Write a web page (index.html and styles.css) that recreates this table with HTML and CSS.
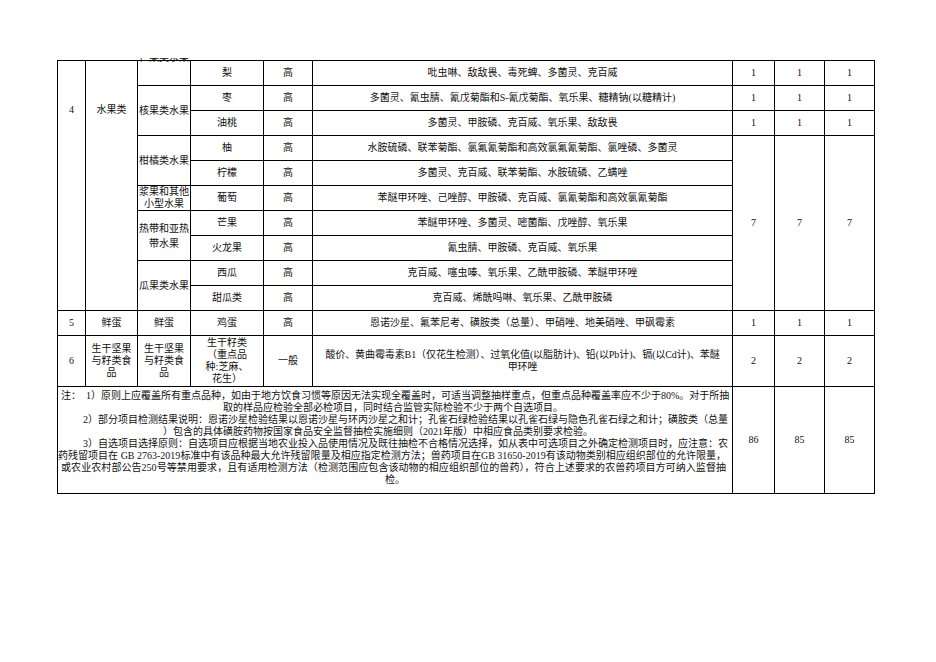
FILE: index.html
```html
<!DOCTYPE html>
<html lang="zh-CN">
<head>
<meta charset="utf-8">
<title>抽检项目表</title>
<link rel="stylesheet" href="styles.css">
</head>
<body>
<div class="page">
  <div class="sheet">
    <div class="c top rs10">4</div>
    <div class="c top rs10">水果类</div>
    <div class="c clipcat"></div>
    <div class="c">梨</div>
    <div class="c">高</div>
    <div class="c">吡虫啉、敌敌畏、毒死蜱、多菌灵、克百威</div>
    <div class="c">1</div><div class="c">1</div><div class="c">1</div>

    <div class="c rs2">核果类水果</div>
    <div class="c">枣</div>
    <div class="c">高</div>
    <div class="c">多菌灵、氰虫腈、氰戊菊酯和S-氰戊菊酯、氧乐果、糖精钠(以糖精计)</div>
    <div class="c">1</div><div class="c">1</div><div class="c">1</div>

    <div class="c">油桃</div>
    <div class="c">高</div>
    <div class="c">多菌灵、甲胺磷、克百威、氧乐果、敌敌畏</div>
    <div class="c">1</div><div class="c">1</div><div class="c">1</div>

    <div class="c rs2">柑橘类水果</div>
    <div class="c">柚</div>
    <div class="c">高</div>
    <div class="c">水胺硫磷、联苯菊酯、氯氟氰菊酯和高效氯氟氰菊酯、氯唑磷、多菌灵</div>
    <div class="c rs7">7</div><div class="c rs7">7</div><div class="c rs7">7</div>

    <div class="c">柠檬</div>
    <div class="c">高</div>
    <div class="c">多菌灵、克百威、联苯菊酯、水胺硫磷、乙螨唑</div>

    <div class="c tight">浆果和其他<br>小型水果</div>
    <div class="c">葡萄</div>
    <div class="c">高</div>
    <div class="c">苯醚甲环唑、己唑醇、甲胺磷、克百威、氯氰菊酯和高效氯氰菊酯</div>

    <div class="c rs2 loose">热带和亚热<br>带水果</div>
    <div class="c">芒果</div>
    <div class="c">高</div>
    <div class="c">苯醚甲环唑、多菌灵、嘧菌酯、戊唑醇、氧乐果</div>

    <div class="c">火龙果</div>
    <div class="c">高</div>
    <div class="c">氰虫腈、甲胺磷、克百威、氧乐果</div>

    <div class="c rs2">瓜果类水果</div>
    <div class="c">西瓜</div>
    <div class="c">高</div>
    <div class="c">克百威、噻虫嗪、氧乐果、乙酰甲胺磷、苯醚甲环唑</div>

    <div class="c">甜瓜类</div>
    <div class="c">高</div>
    <div class="c">克百威、烯酰吗啉、氧乐果、乙酰甲胺磷</div>

    <div class="c">5</div>
    <div class="c">鲜蛋</div>
    <div class="c">鲜蛋</div>
    <div class="c">鸡蛋</div>
    <div class="c">高</div>
    <div class="c">恩诺沙星、氟苯尼考、磺胺类（总量）、甲硝唑、地美硝唑、甲砜霉素</div>
    <div class="c">1</div><div class="c">1</div><div class="c">1</div>

    <div class="c">6</div>
    <div class="c tight">生干坚果<br>与籽类食<br>品</div>
    <div class="c tight">生干坚果<br>与籽类食<br>品</div>
    <div class="c tight">生干籽类<br>（重点品<br>种:芝麻、<br>花生）</div>
    <div class="c">一般</div>
    <div class="c lines">
      <div class="ln">酸价、黄曲霉毒素B1（仅花生检测）、过氧化值(以脂肪计)、铅(以Pb计)、镉(以Cd计)、苯醚</div>
      <div class="ln">甲环唑</div>
    </div>
    <div class="c">2</div><div class="c">2</div><div class="c">2</div>

    <div class="c notes cs6">
      <div class="nl j l1">注：&nbsp;&nbsp;1）原则上应覆盖所有重点品种，如由于地方饮食习惯等原因无法实现全覆盖时，可适当调整抽样重点，但重点品种覆盖率应不少于80%。对于所抽</div>
      <div class="nl l2">取的样品应检验全部必检项目，同时结合监管实际检验不少于两个自选项目。</div>
      <div class="nl j l3">2）部分项目检测结果说明：恩诺沙星检验结果以恩诺沙星与环丙沙星之和计；孔雀石绿检验结果以孔雀石绿与隐色孔雀石绿之和计；磺胺类（总量</div>
      <div class="nl l4">）包含的具体磺胺药物按国家食品安全监督抽检实施细则（2021年版）中相应食品类别要求检验。</div>
      <div class="nl j l3">3）自选项目选择原则：自选项目应根据当地农业投入品使用情况及既往抽检不合格情况选择，如从表中可选项目之外确定检测项目时，应注意：农</div>
      <div class="nl j l6">药残留项目在 GB 2763-2019标准中有该品种最大允许残留限量及相应指定检测方法；兽药项目在GB 31650-2019有该动物类别相应组织部位的允许限量，</div>
      <div class="nl j l1">或农业农村部公告250号等禁用要求，且有适用检测方法（检测范围应包含该动物的相应组织部位的兽药），符合上述要求的农兽药项目方可纳入监督抽</div>
      <div class="nl l8">检。</div>
    </div>
    <div class="c">86</div><div class="c">85</div><div class="c">85</div>
  </div>
  <div class="catclip"><div class="catclip-text">仁果类水果</div></div>
</div>
</body>
</html>
```

FILE: styles.css
```css
html, body {
  margin: 0;
  padding: 0;
  background: #fff;
}

body {
  font-family: "Liberation Serif", "Noto Sans CJK SC", serif;
  font-size: 10px;
  color: #111;
}

.page {
  position: relative;
  width: 936px;
  height: 662px;
  padding: 60px 0 0 57px;
  box-sizing: border-box;
}

.sheet {
  display: grid;
  grid-template-columns: 27px 51px 52px 72px 48px 419px 41px 49px 49px;
  grid-template-rows: repeat(11, 24px) 50px 106px;
  gap: 1px;
  padding: 1px;
  background: #000;
  width: max-content;
}

.c {
  background: #fff;
  display: flex;
  flex-direction: column;
  align-items: center;
  justify-content: center;
  text-align: center;
  line-height: 12px;
  white-space: nowrap;
  overflow: hidden;
}

.rs2 { grid-row: span 2; }
.rs7 { grid-row: span 7; }
.rs10 { grid-row: span 10; }
.cs6 { grid-column: span 6; }

.top {
  justify-content: flex-start;
  padding-top: 43px;
}

.tight { line-height: 12px; }
.loose { line-height: 15px; }

.lines .ln {
  line-height: 12px;
  letter-spacing: -0.1px;
}

.notes {
  align-items: stretch;
  justify-content: flex-start;
  padding: 3px 6px 0 0;
  text-align: left;
}

.nl {
  line-height: 12px;
  height: 12px;
  white-space: nowrap;
}

.nl.j {
  text-align: justify;
  text-align-last: justify;
}

.l1 { padding-left: 3px; }
.l2 { padding-left: 165px; }
.l3 { padding-left: 25px; }
.l4 { padding-left: 105px; }
.l6 { padding-left: 0; }
.l8 { text-align: center; padding-left: 6px; }

.catclip {
  position: absolute;
  left: 138px;
  top: 58px;
  width: 52px;
  height: 6px;
  overflow: hidden;
}

.catclip-text {
  margin-top: -6px;
  line-height: 12px;
  text-align: center;
  white-space: nowrap;
}
```
